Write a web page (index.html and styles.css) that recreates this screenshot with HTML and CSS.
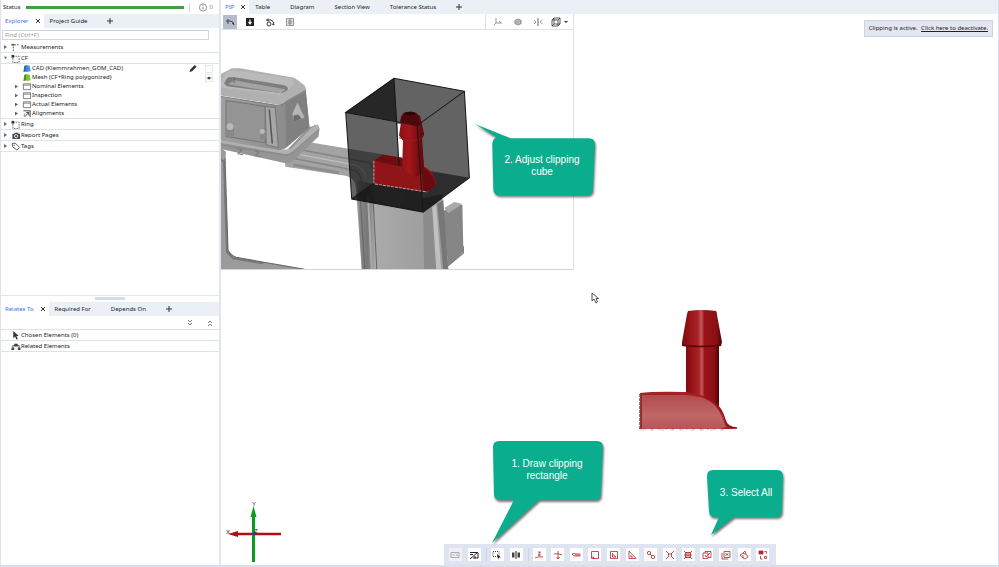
FILE: index.html
```html
<!DOCTYPE html>
<html lang="en">
<head>
<meta charset="utf-8">
<title>Inspection workspace</title>
<link rel="stylesheet" href="styles.css">
</head>
<body>
<div class="app">
  <aside class="sidebar">
    <div class="status">
      <span>Status</span>
      <div class="status-bar"></div>
      <span class="status-info">
        <svg class="icon" viewBox="0 0 10 10"><circle cx="5" cy="5" r="4" fill="none" stroke="#888"/><path d="M5 4.3v3M5 2.4v1" stroke="#777"/></svg>
        0
      </span>
    </div>
    <nav class="tabs">
      <span class="tab active"><a href="#">Explorer</a><button class="close" aria-label="Close"><svg viewBox="0 0 6 6"><path d="M1 1l4 4M5 1l-4 4"/></svg></button></span>
      <a class="tab" href="#">Project Guide</a>
      <button class="add" aria-label="Add tab"><svg viewBox="0 0 6 6"><path d="M3 0v6M0 3h6"/></svg></button>
    </nav>
    <div class="search"><input type="text" placeholder="Find (Ctrl+F)" aria-label="Find"></div>
    <ul class="tree">
      <li class="row top"><i class="arrow"></i><svg class="icon" viewBox="0 0 10 10"><path d="M3 2h6M2 4v5" fill="none" stroke="#555" stroke-dasharray="2 1"/><path d="M0 1h3v2H0z" fill="#555"/></svg>Measurements</li>
      <li class="row top"><i class="arrow open"></i><svg class="icon" viewBox="0 0 10 10"><path d="M1.500 2.500h7v7h-7z" fill="none" stroke="#666" stroke-dasharray="2 1"/><path d="M0 1h3v3H0z" fill="#333"/></svg>CF</li>
      <li class="row leaf"><svg class="icon" viewBox="0 0 10 10"><path d="M2 2l3-1v7l-4 1z" fill="#2767b5"/><path d="M4 1l4 1 1 6-5 1z" fill="#4b8ee0"/></svg>CAD (Klemmrahmen_GOM_CAD)
        <span class="marks"><svg class="icon" viewBox="0 0 10 10"><path d="M1 9l1-3L7 1l2 2-5 5z" fill="#333"/></svg><button class="eye" aria-label="Show CAD"></button></span></li>
      <li class="row leaf"><svg class="icon" viewBox="0 0 10 10"><path d="M2 2l3-1v7l-4 1z" fill="#4b9416"/><path d="M4 1l4 1 1 6-5 1z" fill="#7cc533"/></svg>Mesh (CF+Ring polygonized)
        <span class="marks"><button class="eye" aria-label="Hide mesh"><svg viewBox="0 0 8 8"><path d="M0 4q4-4 8 0q-4 4-8 0z" fill="#aaa"/><circle cx="4" cy="4" r="1.500" fill="#333"/></svg></button></span></li>
      <li class="row sub"><i class="arrow"></i><svg class="icon" viewBox="0 0 10 10"><path d="M1 2h8v6.500H1zM1 3.500h8" fill="none" stroke="#777"/></svg>Nominal Elements</li>
      <li class="row sub"><i class="arrow"></i><svg class="icon" viewBox="0 0 10 10"><path d="M1 2h8v6.500H1zM1 3.500h8" fill="none" stroke="#777"/></svg>Inspection</li>
      <li class="row sub"><i class="arrow"></i><svg class="icon" viewBox="0 0 10 10"><path d="M1 2h8v6.500H1zM1 3.500h8" fill="none" stroke="#777"/></svg>Actual Elements</li>
      <li class="row sub last"><i class="arrow"></i><svg class="icon" viewBox="0 0 10 10"><path d="M1 2h7.500v7M3 8l4-4M4 4h3v3" fill="none" stroke="#333"/><path d="M2 5v4" stroke="#777"/></svg>Alignments</li>
      <li class="row top"><i class="arrow"></i><svg class="icon" viewBox="0 0 10 10"><path d="M1.500 2.500h7v7h-7z" fill="none" stroke="#666" stroke-dasharray="2 1"/><path d="M0 1h3v3H0z" fill="#333"/></svg>Ring</li>
      <li class="row top"><i class="arrow"></i><svg class="icon" viewBox="0 0 10 10"><path d="M1 3h2l1-1h3l1 1h1.500v6H1z" fill="#444"/><circle cx="5.200" cy="5.700" r="1.800" fill="none" stroke="#fff"/></svg>Report Pages</li>
      <li class="row top"><i class="arrow"></i><svg class="icon" viewBox="0 0 10 10"><path d="M1 1.500h3.500L9 6 6 9 1 5z" fill="none" stroke="#555"/><circle cx="3" cy="3.500" r=".8" fill="#555"/></svg>Tags</li>
    </ul>
    <div class="splitter"></div>
    <nav class="tabs">
      <span class="tab active"><a href="#">Relates To</a><button class="close" aria-label="Close"><svg viewBox="0 0 6 6"><path d="M1 1l4 4M5 1l-4 4"/></svg></button></span>
      <a class="tab" href="#">Required For</a>
      <a class="tab" href="#">Depends On</a>
      <button class="add" aria-label="Add tab"><svg viewBox="0 0 6 6"><path d="M3 0v6M0 3h6"/></svg></button>
    </nav>
    <div class="fold">
      <button aria-label="Expand all"><svg viewBox="0 0 6 6"><path d="M1 0l2 2 2-2M1 3l2 2 2-2"/></svg></button>
      <button aria-label="Collapse all"><svg viewBox="0 0 6 6"><path d="M1 3l2-2 2 2M1 6l2-2 2 2"/></svg></button>
    </div>
    <ul class="tree relations">
      <li class="row top"><svg class="icon" viewBox="0 0 10 10"><path d="M2 0v8l2-2 1.500 3.500 1.500-.7L5.500 5.500H8z" fill="#333"/></svg>Chosen Elements (0)</li>
      <li class="row top"><svg class="icon" viewBox="0 0 10 10"><path d="M3 2h4v3H3zM0 6h3v3H0zM7 6h3v3H7z" fill="#444"/><path d="M1.500 6V4h7v2" fill="none" stroke="#444"/></svg>Related Elements</li>
    </ul>
  </aside>

  <main class="main">
    <nav class="tabs">
      <span class="tab active"><a href="#">PIP</a><button class="close" aria-label="Close"><svg viewBox="0 0 6 6"><path d="M1 1l4 4M5 1l-4 4"/></svg></button></span>
      <a class="tab" href="#">Table</a>
      <a class="tab" href="#">Diagram</a>
      <a class="tab" href="#">Section View</a>
      <a class="tab" href="#">Tolerance Status</a>
      <button class="add" aria-label="Add tab"><svg viewBox="0 0 6 6"><path d="M3 0v6M0 3h6"/></svg></button>
    </nav>
    <div class="viewport">
      <section class="pip">
        <div class="pip-bar">
          <button class="on" aria-label="Orbit"><svg viewBox="0 0 10 10"><path d="M1 4h4M3 2v5M5 4q4 0 4 4M7 6l2 2" fill="none" stroke="#444"/></svg></button>
          <button aria-label="Place"><svg viewBox="0 0 10 10"><path d="M1 1h8v8H1z" fill="#222"/><path d="M5 2.500v4M3.500 5L5 7l1.500-2" stroke="#fff" fill="none" stroke-width="1.200"/></svg></button>
          <button aria-label="Rotate"><svg viewBox="0 0 10 10"><path d="M1 3h5M3 1.500v3" stroke="#333"/><circle cx="4" cy="7" r="2" fill="none" stroke="#333"/><path d="M6 3q3 1 3 5M7 7l2 1" fill="none" stroke="#333"/></svg></button>
          <button aria-label="Layout"><svg viewBox="0 0 10 10"><path d="M1.500 1.500h7v7h-7z" fill="#ddd" stroke="#999"/><path d="M5 2v6M3 4h4M3 6h4" fill="none" stroke="#888"/></svg></button>
          <span class="views">
            <button aria-label="Align"><svg viewBox="0 0 10 10"><path d="M3 1v5M1 8l2-2h6M6 4l2 2" fill="none" stroke="#999"/></svg></button>
            <button aria-label="Globe"><svg viewBox="0 0 10 10"><circle cx="5" cy="5" r="3" fill="#ccc" stroke="#999"/><path d="M1 4h8M1 6h8" stroke="#888" stroke-width=".7"/></svg></button>
            <button aria-label="Mirror"><svg viewBox="0 0 10 10"><path d="M5 1v8" stroke="#666"/><path d="M1 3l2 2-2 2M9.500 3L7 5l2.500 2" fill="none" stroke="#999"/></svg></button>
            <button class="drop" aria-label="View direction"><svg viewBox="0 0 10 10"><path d="M1 3h6v6H1zM1 3l2-2h6L7 3M9 1v6L7 9M3 1v6h6M3 7L1 9" fill="none" stroke="#333" stroke-width=".8"/></svg></button>
          </span>
        </div>
        <svg class="pip-scene" viewBox="222 31 350 238" role="img" aria-label="Part with clipping cube">
          <defs>
            <linearGradient id="col" x1="0" x2="1"><stop offset="0" stop-color="#8c8c8c"/><stop offset=".12" stop-color="#777"/><stop offset=".2" stop-color="#aaa"/><stop offset="1" stop-color="#999"/></linearGradient>
            <linearGradient id="body" x1="0" x2="1"><stop offset="0" stop-color="#a0a0a0"/><stop offset="1" stop-color="#858585"/></linearGradient>
            <linearGradient id="hose" x1="0" x2="1"><stop offset="0" stop-color="#861216"/><stop offset=".4" stop-color="#a5161b"/><stop offset="1" stop-color="#5d090c"/></linearGradient>
          </defs>
          <path d="M222 148l5 4-1 14 3 84q1 5 8 7l69 12h-84z" fill="#9b9b9b"/>
          <path d="M221 160l4 2 3 90 6 6 30 5" fill="none" stroke="#777" stroke-width="2"/>
          <path d="M226 158l3 92q2 5 8 7l68 12" fill="none" stroke="#666"/>
          <path d="M285 156l28-13 72 12 37 20v37l22 58h-82l-6-83q-1-9-10-11l-60-9z" fill="#a3a3a3"/>
          <path d="M296 149l74 14 7 13M291 158l61 12q10 2 10 14l4 86" fill="none" stroke="#858585" stroke-width="1.500"/>
          <path d="M296 154l58 11q10 2 12 13" fill="none" stroke="#c4c4c4"/>
          <path d="M294 165l45 8" stroke="#8d8d8d" stroke-width="3"/>
          <path d="M442 212l13-9 7 2 1 47-15 14z" fill="#868686"/>
          <path d="M444 208l10-6 8 2-14 9z" fill="#aaa"/>
          <path d="M447 266l16-13v-7" fill="none" stroke="#777"/>
          <path d="M357 180l67 18 18-4 6 75h-86z" fill="url(#col)"/>
          <path d="M360 190l5 80M373 195l4 75" stroke="#666"/>
          <path d="M368 194l4 76" stroke="#aaa" stroke-width="2"/>
          <path d="M423 212l9-6 7 63h-15z" fill="#8b8b8b"/><path d="M432 207l4-2 5 64h-5z" fill="#c0c0c0"/><path d="M437 204l6-4 5 69h-5z" fill="#777"/>
          <path d="M221 141l66 10 22-23 9-3 2 4-1 8-23 22q-5 5-12 4l-63-14z" fill="#959595"/>
          <path d="M221 141l63 9 8-1 23-24 4 1v5l-25 21q-4 3-10 2l-63-11z" fill="#b1b1b1"/>
          <path d="M221 145l63 10q6 1 10-3l25-22" fill="none" stroke="#888"/>
          <path d="M221 97l59 9 26-17 4 39-23 20q-4 3-9 2l-57-9z" fill="url(#body)"/>
          <path d="M286 104l20-15 4 39-23 19z" fill="#808080"/>
          <path d="M221 75l12-6h8l51 9q3 0 5 2l8 6q2 3 1 6l-21 11q-3 3-8 2l-56-9z" fill="#b0b0b0"/>
          <path d="M221 85l5-11q3-3 9-3l56 8q5 2 3 6l-8 8q-4 4-9 2l-56-7z" fill="#bababa"/>
          <path d="M225 84l3-5q2-2 8-1l49 8q5 2 3 5l-5 3-55-7z" fill="#7e7e7e"/>
          <path d="M229 85l6-4 51 9-4 4z" fill="#a3a3a3"/>
          <path d="M235 79v5" fill="none" stroke="#666"/><path d="M221 97l57 9q6 0 9-4l19-11" fill="none" stroke="#808080"/>
          <path d="M227 101l39 6v36l-39-6z" fill="#949494" stroke="#747474"/>
          <path d="M266 107l10 1 3 40-12-3z" fill="#a6a6a6" stroke="#757575"/><path d="M270 110l3 34" stroke="#555" stroke-width="1.500"/>
          <path d="M227 124h8v13h-8zM261 131h6v9h-6z" fill="#888"/>
          <circle cx="231" cy="127" r="3.500" fill="#b8b8b8"/><circle cx="263" cy="132" r="2.500" fill="#b8b8b8"/>
          <path d="M298 103l7 15-10 4-2-8z" fill="#b5b5b5"/><path d="M294 116l5-1 3 4-7 3z" fill="#6c6c6c"/>
          <path d="M238 149l5 1-4 4 5 1M255 151l5 1-4 4 5 1" fill="none" stroke="#7b7b7b"/>

          <path d="M346 113l48-34 70 13 5 86-46 34-71-13z" fill="#000" fill-opacity=".61"/>
          <path d="M397.500 124l5 1 1 34-5-1z" fill="#fff"/>
          <path d="M346 113l48-34 3 43z" fill="#111" fill-opacity=".72"/>
          <path d="M352 199l47-33 70 12-46 34z" fill="#111" fill-opacity=".66"/>
          <path d="M374 161l9-6 19 3v12l20-4q10 4 12 12l2 6-8 8-54-8z" fill="#8f1518"/>
          <path d="M374 161l9-6 19 3 3 6-3 3z" fill="#6e0d10"/>
          <path d="M402 116h18l4 19-2 4 2 34-10 5-12-9 1-28-4-5z" fill="url(#hose)"/>
          <path d="M401 118q1-6 9-6t9 6l1 8-20-4z" fill="#4c080a"/><ellipse cx="410" cy="114" rx="5" ry="1.500" fill="#2b0405"/>
          <path d="M420 126l3 66 6-1 6-5q0-10-11-18z" fill="#680b0e"/>
          <path d="M399 138q12 5 22 1" fill="none" stroke="#a01c20"/>
          <path d="M374 161v23l53 8" fill="none" stroke="#c9a0a0" stroke-dasharray="3 1"/>
          <path d="M346 113l48-34 70 13-47 34zM346 113l6 86 71 13-6-86M464 92l5 86-46 34M394 79l5 87M352 199l22-16" fill="none" stroke="#161616"/>
        </svg>
      </section>

      <div class="notice">Clipping is active. <a href="#">Click here to deactivate.</a></div>

      <svg class="part" viewBox="638 308 102 124" role="img" aria-label="Clipped part">
        <defs>
          <linearGradient id="tube" x1="0" x2="1"><stop offset="0" stop-color="#7d0c10"/><stop offset=".2" stop-color="#9a1418"/><stop offset=".4" stop-color="#a82427"/><stop offset=".48" stop-color="#c25a5d"/><stop offset=".56" stop-color="#9a1418"/><stop offset=".85" stop-color="#8c1014"/><stop offset="1" stop-color="#4c0508"/></linearGradient>
          <linearGradient id="base" x1="0" y1="0" x2="0" y2="1"><stop offset="0" stop-color="#b24b4e"/><stop offset=".6" stop-color="#c06668"/><stop offset="1" stop-color="#b85457"/></linearGradient>
        </defs>
        <path d="M686 345h33v62l-33-6z" fill="url(#tube)"/>
        <path d="M640 393q15-2 46-1l14 3q18 4 23 21 3 12 15 13h-98z" fill="#a32024"/>
        <path d="M688 311q14-2 28 0 1 1 1 4l5 27-1 4q-19 3-39 0v-4l5-28z" fill="url(#tube)"/>
        <path d="M682 345q19 3 39 0" fill="none" stroke="#580609" stroke-width="1.500"/>
        <path d="M642 395h44l14 2q16 4 23 22l3 8-5 2h-79z" fill="url(#base)"/>
        <path d="M704 397q16 5 21 23 2 8 12 8" fill="none" stroke="#8f1317" stroke-width="1.500"/>
        <path d="M640 394v35" stroke="#5f5555" stroke-width="1.500" stroke-dasharray="3 1"/><path d="M640 430h84" stroke="#ddd" stroke-width="1.500" stroke-dasharray="4 6"/><path d="M644 429h84" stroke="#725" stroke-opacity=".4" stroke-dasharray="2 5"/>
      </svg>

      <svg class="pointer" viewBox="0 0 8 12"><path d="M1 1v8l2-2 2 4 1.500-1L5 6.500h2.500z" fill="#fff" stroke="#222" stroke-width=".8"/></svg>

      <svg class="axes" viewBox="224 500 60 64" role="img" aria-label="Axes">
        <path d="M236 534h45" stroke="#b10e12" stroke-width="2.500"/><path d="M228 534l10-3v6z" fill="#b10e12"/>
        <path d="M253.500 515v47" stroke="#0d9c20" stroke-width="3"/><path d="M253.500 506l-3 11h6z" fill="#0d9c20"/>
        <circle cx="254" cy="534" r="1.500" fill="#2431c4"/>
        <text x="252" y="506">Y</text><text x="226" y="534">X</text><text x="254" y="533">Z</text>
      </svg>

      <div class="callout cube"><svg class="tail" viewBox="0 0 120 74"><path d="M22 14L1 1l35 14h77q6 0 6 6l-2 44q0 6-6 6H25q-6 0-6-6l-1-44q0-5 4-7z"/></svg><p>2. Adjust clipping cube</p></div>
      <div class="callout draw"><svg class="tail" viewBox="0 0 116 106"><path d="M8 1h98q6 0 6 6l-2 47q0 6-6 6H48L1 103l22-43H9q-6 0-6-6L2 7q0-6 6-6z"/></svg><p>1. Draw clipping rectangle</p></div>
      <div class="callout all"><svg class="tail" viewBox="0 0 80 68"><path d="M7 1h64q6 0 6 6l-1 35q0 6-6 6H28L5 66l8-18H9q-6 0-6-6L1 7q0-6 6-6z"/></svg><p>3. Select All</p></div>

      <div class="tools">
        <div class="group">
          <button class="off" aria-label="Rename"><svg viewBox="0 0 10 10"><path d="M1 2.500h8v5H1zM2.500 5h2M6 5h2" fill="none" stroke="#aaa"/></svg></button>
          <button aria-label="Hide all"><svg viewBox="0 0 10 10"><path d="M1 2.500h7M1 4.500h3M6 6v2.500M9 3v5H4M1 9l8-7" fill="none" stroke="#222"/></svg></button>
        </div>
        <div class="group">
          <button aria-label="Select rectangle"><svg viewBox="0 0 10 10"><path d="M1 1.500h6v5H1z" fill="none" stroke="#444" stroke-dasharray="1 1"/><path d="M5 4l4 3.500H7L6 9.500z" fill="#222"/></svg></button>
          <button aria-label="Split view"><svg viewBox="0 0 10 10"><path d="M1 2.500h2.500v5H1zM6.500 2.500H9v5H6.500z" fill="#444"/><path d="M5 1v8" stroke="#222"/></svg></button>
        </div>
        <div class="group red">
          <button aria-label="Select point"><svg viewBox="0 0 10 10"><path d="M1 8q4-2 8-1M5 1v5M5 3l2-1M4 5h3"/></svg></button>
          <button aria-label="Select through"><svg viewBox="0 0 10 10"><path d="M1 4q4-1 8 1M5 1v8M3.500 7L5 9l1.500-2"/></svg></button>
          <button aria-label="Select surface"><svg viewBox="0 0 10 10"><path d="M1 4q2-1 4 0h4v2H4Q2 6 1 4zM4 5h4"/></svg></button>
          <button aria-label="Select box"><svg viewBox="0 0 10 10"><path d="M1.500 1.500h7v7h-7zM1.500 7h2v2"/></svg></button>
          <button aria-label="Select image"><svg viewBox="0 0 10 10"><path d="M1.500 1.500h7v7h-7zM3.500 3v4H7L4 4.500"/></svg></button>
          <button aria-label="Select triangle"><svg viewBox="0 0 10 10"><path d="M2 1v7.500h7zM4 5v2h2"/></svg></button>
          <button aria-label="Select connected"><svg viewBox="0 0 10 10"><circle cx="3" cy="3" r="1.700"/><circle cx="7" cy="7" r="1.700"/><path d="M4 4l2 2"/></svg></button>
          <button aria-label="Shrink selection"><svg viewBox="0 0 10 10"><path d="M1 1l2 2M9 1L7 3M1 9l2-2M9 9L7 7M3.500 3v4M6.500 3v4M3 4h4"/></svg></button>
          <button aria-label="Grow selection"><svg viewBox="0 0 10 10"><path d="M1 1l2 2M9 1L7 3M1 9l2-2M9 9L7 7M2.500 2.500h5v5h-5zM4 2v6M6 2v6M1 5h8"/></svg></button>
          <button aria-label="Select all"><svg viewBox="0 0 10 10"><path d="M1 3h5v5.500H1zM3 3V1.500h6v6H6M3 5l1 2 4-4"/></svg></button>
          <button aria-label="Deselect all"><svg viewBox="0 0 10 10"><path d="M1 3v6h6M3 1.500h6v6H3zM4.500 3l3 3M7.500 3l-3 3"/></svg></button>
          <button aria-label="Invert selection"><svg viewBox="0 0 10 10"><path d="M1 5l3-2 4 2 1 2-3 2-2-1zM4 3l2-2 1 3M4 8V5"/></svg></button>
          <button aria-label="Select by pattern"><svg viewBox="0 0 10 10"><path d="M1 1h4v3H1z" fill="#b3262b"/><path d="M6.500 1.500h2v2M2.500 6v3h2M6.500 6.500h2v2h-2z"/></svg></button>
        </div>
      </div>
    </div>
  </main>
</div>
</body>
</html>
```

FILE: styles.css
```css
* { box-sizing: border-box; }
body {
  margin: 0;
  background: #fff;
  color: #222;
  font: 6px/9px "Noto Sans", "Open Sans", sans-serif;
}
button { padding: 0; border: 0; background: none; display: grid; place-items: center; }
a { color: inherit; text-decoration: none; }
svg { display: block; }
.icon { width: 10px; height: 9px; flex: none; }

.app { display: flex; min-height: 100vh; border-bottom: 2px solid #d9dfeb; }
.sidebar {
  flex: none;
  width: 221px;
  display: flex;
  flex-direction: column;
  border-right: 2px solid #e0e5ef;
  border-left: 1px solid #dde2ec;
}
.main { flex: 1; display: flex; flex-direction: column; min-width: 0; border-right: 1px solid #d9dfeb; }

.status { display: flex; align-items: center; height: 14px; padding: 0 6px 0 2px; gap: 5px; }
.status-bar { flex: 1; height: 3px; background: #3f9f43; }
.status-info {
  display: flex;
  align-items: center;
  gap: 2px;
  height: 9px;
  padding-left: 8px;
  border-left: 1px solid #d5dbe8;
  color: #888;
}

.tabs { display: flex; align-items: stretch; height: 14px; background: #eaf0f6; }
.tab { display: flex; align-items: center; padding: 0 10px; }
.tab.active { gap: 6px; padding: 0 3px 0 4px; background: #fff; color: #3b73ee; }
.tab.active + .tab { padding-left: 6px; }
.close, .add { color: #333; }
.close svg, .add svg { width: 6px; height: 6px; fill: none; stroke: currentColor; }
.add { margin-left: 10px; }

.search { padding: 2px 10px 2px 1px; }
.search input {
  display: block;
  width: 100%;
  height: 10px;
  padding: 0 2px;
  border: 1px solid #ccd5e5;
  font: inherit;
}
.search input::placeholder { color: #999; }

.tree { margin: 0; padding: 0; list-style: none; }
.row { display: flex; align-items: center; height: 9px; }
.row.top { height: 11px; padding-left: 3px; border-bottom: 1px solid #dde2ec; }
.row.sub { padding-left: 14px; }
.row.sub.last { height: 10px; border-bottom: 1px solid #dde2ec; }
.row.leaf { padding: 0 6px 0 21px; }
.arrow {
  width: 3px;
  height: 4px;
  margin-right: 4px;
  background: #666;
  clip-path: polygon(0 0, 100% 50%, 0 100%);
}
.arrow.open { clip-path: polygon(0 20%, 100% 20%, 50% 80%); }
.marks { display: flex; align-items: center; gap: 7px; margin-left: auto; }
.eye { width: 8px; height: 8px; border: 1px solid #e4e7ee; }
.eye svg { width: 6px; height: 6px; }
.relations .row { padding-left: 10px; }
.splitter {
  flex: 1;
  min-height: 8px;
  background:
    linear-gradient(#d4dbe8, #d4dbe8) 50% calc(100% - 2px) / 30px 3px no-repeat,
    linear-gradient(#e2e6ef, #e2e6ef) 0 calc(100% - 6px) / 100% 1px no-repeat;
}
.fold { display: flex; justify-content: flex-end; align-items: center; gap: 14px; height: 14px; padding-right: 6px; border-bottom: 1px solid #dde2ec; }
.fold svg { width: 6px; height: 6px; fill: none; stroke: #777; }
.relations { flex: none; height: 235px; }

.viewport { position: relative; flex: 1; display: flex; flex-direction: column; align-items: flex-start; }
.pip { width: 353px; border-right: 1px solid #dfe2ea; border-bottom: 1px solid #cfd6e2; }
.pip-bar { display: flex; align-items: center; gap: 6px; height: 16px; padding-left: 2px; border-bottom: 1px solid #dde1ee; }
.pip-bar button { width: 14px; height: 14px; }
.pip-bar button.on { background: #b5bccb; }
.pip-bar svg { width: 10px; height: 10px; }
.views { display: flex; align-items: center; gap: 6px; height: 16px; margin-left: auto; padding: 0 4px 0 5px; border-left: 1px solid #dde1ee; }
.pip-bar .drop { display: flex; align-items: center; gap: 3px; width: 18px; }
.drop::after { content: ""; border: 2px solid transparent; border-top-color: #333; border-bottom: 0; }
.pip-scene { width: 100%; }

.notice {
  position: absolute;
  top: 6px;
  right: 5px;
  padding: 3px 4px;
  border: 1px solid #ccd3e2;
  background: #e1e6f0;
  color: #222;
}
.notice a { margin-left: 2px; text-decoration: underline; }
.part { position: absolute; left: 417px; top: 294px; width: 102px; }
.pointer { position: absolute; left: 370px; top: 278px; width: 8px; }
.axes { position: absolute; left: 3px; bottom: 1px; width: 60px; }
.axes text { font: 6px "Liberation Sans", sans-serif; fill: #222; }

.callout {
  position: absolute;
  display: grid;
  color: #fff;
  font: 10px/12px "Liberation Sans", Arial, sans-serif;
  text-align: center;
}
.callout > * { grid-area: 1 / 1; }
.callout p { z-index: 1; margin: 0; }
.tail { width: 100%; fill: #0aae8e; filter: drop-shadow(1px 2px 1px #0008); }
.cube { left: 253px; top: 109px; width: 122px; }
.cube p { padding: 31px 10px 0 24px; }
.draw { left: 270px; top: 426px; width: 116px; }
.draw p { padding: 18px 20px 0 16px; }
.all { left: 485px; top: 455px; width: 80px; }
.all p { padding: 18px 2px 0; }

.tools {
  display: flex;
  align-items: center;
  width: 332px;
  height: 21px;
  margin: auto auto 0;
  padding: 0 6px 0 5px;
  background: #dfe5f0;
}
.group { display: flex; gap: 6px; }
.group + .group { margin-left: 5px; padding-left: 4px; border-left: 1px solid #ccd3e2; }
.group.red { flex: 1; justify-content: space-between; gap: 0; }
.tools button { width: 13px; height: 13px; background: #fff; }
.tools button.off { background: #eef0f5; }
.tools svg { width: 10px; height: 10px; }
.red svg { fill: none; stroke: #b3262b; stroke-width: .8; }
```
